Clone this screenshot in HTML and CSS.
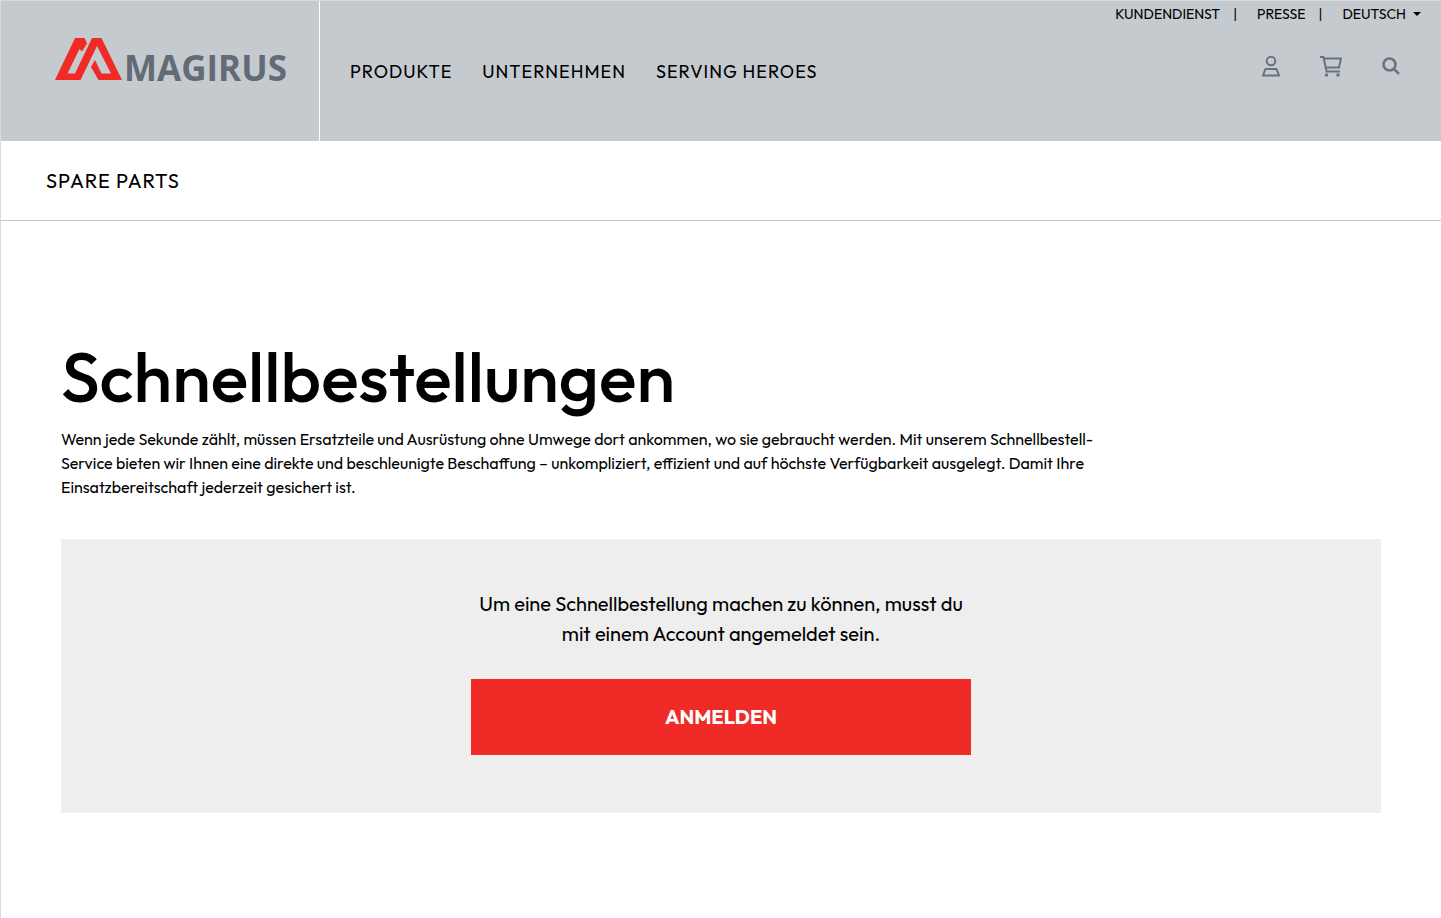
FILE: index.html
```html
<!DOCTYPE html>
<html lang="de">
    <head>
        <meta charset="utf-8">
        <title>Schnellbestellungen</title>
        <meta name="viewport" content="width=device-width, initial-scale=1">
        <link rel="stylesheet" href="styles.css">
    </head>

    <body>
        <header class="header">
            <a class="logo" href="#">
                <svg class="logo-mark" viewBox="0 0 67 42" aria-hidden="true">
                    <path d="M0 42 20 0H29.500L32 5.500 27 13.500 24.500 11 12.500 35.500H20L37 0H46.500L67 42H43.500L36 29 40 22 46.500 35.500H56L42 8 25.500 42Z"/>
                </svg>
                <span class="logo-name">MAGIRUS</span>
            </a>

            <nav class="main-nav">
                <a href="#">PRODUKTE</a>
                <a href="#">UNTERNEHMEN</a>
                <a href="#">SERVING HEROES</a>
            </nav>

            <div class="header-side">
                <nav class="meta-nav">
                    <a href="#">KUNDENDIENST</a>
                    <a href="#">PRESSE</a>
                    <button class="language" type="button">DEUTSCH</button>
                </nav>

                <div class="tools">
                    <a href="#" aria-label="Konto">
                        <svg viewBox="0 0 24 24">
                            <circle cx="12" cy="7" r="4.300"/>
                            <path d="M6.500 15H17.500L20 21.500H4Z"/>
                        </svg>
                    </a>
                    <a href="#" aria-label="Warenkorb">
                        <svg viewBox="0 0 24 24">
                            <path d="M1 3H4.500L7.500 17.500H21M5 4.500H22L20 13.500H6.800"/>
                            <circle class="wheel" cx="7.500" cy="21" r="1.800"/>
                            <circle class="wheel" cx="19" cy="21" r="1.800"/>
                        </svg>
                    </a>
                    <button type="button" aria-label="Suche">
                        <svg viewBox="0 0 24 24">
                            <circle class="bold" cx="10.500" cy="10.500" r="6"/>
                            <path class="bold" d="M15 15 20 20"/>
                        </svg>
                    </button>
                </div>
            </div>
        </header>

        <nav class="sub-nav">
            <a href="#">SPARE PARTS</a>
        </nav>

        <main class="content">
            <h1>Schnellbestellungen</h1>
            <p class="intro">Wenn jede Sekunde zählt, müssen Ersatzteile und Ausrüstung ohne Umwege dort ankommen, wo sie gebraucht werden. Mit unserem Schnellbestell-Service bieten wir Ihnen eine direkte und beschleunigte Beschaffung – unkompliziert, effizient und auf höchste Verfügbarkeit ausgelegt. Damit Ihre Einsatzbereitschaft jederzeit gesichert ist.</p>

            <section class="login">
                <p>Um eine Schnellbestellung machen zu können, musst du mit einem Account angemeldet sein.</p>
                <button class="login-button" type="button">ANMELDEN</button>
            </section>
        </main>
    </body>
</html>
```
FILE: styles.css
```css
* {
    box-sizing: border-box;
}

body {
    min-height: 100vh;
    margin: 0;
    border-left: 1px solid #d9dbdd;
    background-color: #fff;
    color: #000;
    font-family: Outfit, Lato, sans-serif;
    font-size: 16px;
    line-height: 24px;
}

a {
    color: inherit;
    text-decoration: none;
}

button {
    padding: 0;
    border: 0;
    background: none;
    color: inherit;
    font: inherit;
    cursor: pointer;
}

.header {
    display: flex;
    height: 141px;
    border-top: 1px solid #d9dbdd;
    background-color: #c5cacf;
}

.logo {
    display: flex;
    flex: none;
    align-items: flex-start;
    gap: 2px;
    width: 319px;
    padding: 37px 0 0 54px;
    border-right: 1px solid #fff;
}

.logo-mark {
    width: 67px;
    height: 42px;
    fill: #f02a26;
}

.logo-name {
    padding-top: 13px;
    color: #626b76;
    font-family: "Open Sans", sans-serif;
    font-size: 35px;
    font-weight: 700;
    line-height: 34px;
}

.main-nav {
    display: flex;
    flex: 1;
    align-items: center;
    gap: 30px;
    padding: 2px 0 0 30px;
    font-size: 18px;
    letter-spacing: 1px;
    white-space: nowrap;
}

.header-side {
    display: flex;
    flex-direction: column;
    align-items: flex-end;
    gap: 28px;
    padding-right: 20px;
}

.meta-nav {
    display: flex;
    align-items: center;
    padding-top: 1px;
    font-size: 14px;
}

.meta-nav a::after {
    content: "|";
    margin: 0 20px 0 13px;
}

.language {
    display: flex;
    align-items: center;
    gap: 7px;
}

.language::after {
    content: "";
    border: 4px solid transparent;
    border-top-color: currentColor;
    border-bottom: 0;
}

.tools {
    display: flex;
    gap: 36px;
    padding-right: 18px;
}

.tools a,
.tools button {
    height: 24px;
}

.tools svg {
    display: block;
    width: 24px;
    height: 24px;
    fill: none;
    stroke: #69737e;
    stroke-width: 2;
}

.tools .bold {
    stroke-width: 2.500;
}

.tools .wheel {
    fill: #69737e;
    stroke: none;
}

.sub-nav {
    display: flex;
    align-items: center;
    height: 80px;
    padding: 0 45px;
    border-bottom: 1px solid #c5c8cb;
    font-size: 20px;
    letter-spacing: 1px;
}

.content {
    padding: 110px 60px 105px;
}

h1 {
    margin: 0 0 6px;
    font-size: 70px;
    font-weight: 500;
    line-height: 90px;
}

.intro {
    max-width: 1040px;
    margin: 0 0 40px;
}

.login {
    padding: 50px 20px 58px;
    background-color: #eee;
    font-size: 20px;
    line-height: 30px;
    text-align: center;
}

.login p {
    max-width: 500px;
    margin: 0 auto 30px;
}

.login-button {
    width: 100%;
    max-width: 500px;
    height: 76px;
    background-color: #f02a26;
    color: #fff;
    font-weight: 700;
}
```
